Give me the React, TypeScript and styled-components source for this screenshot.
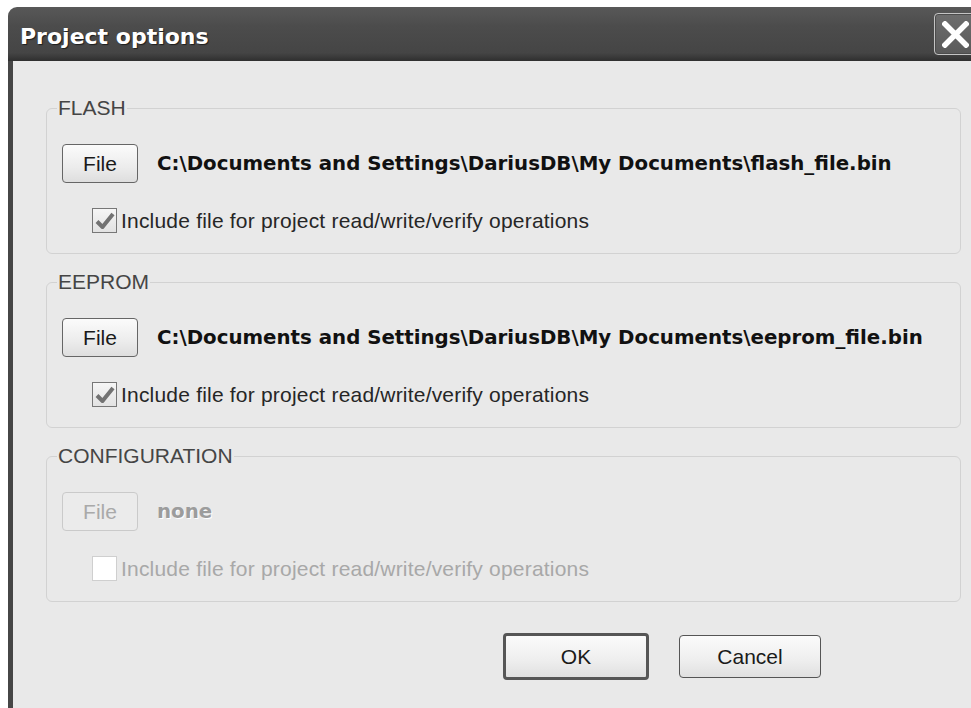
import React from 'react';
import styled, { createGlobalStyle } from 'styled-components';

const GlobalStyle = createGlobalStyle`
  html, body {
    margin: 0;
    padding: 0;
    background: #ffffff;
    overflow: hidden;
  }
  body {
    font-family: 'Liberation Sans', Arial, sans-serif;
  }
`;

const Window = styled.div`
  margin: 7px 0 0 8px;
  height: 701px;
  display: flex;
  flex-direction: column;
  overflow: hidden;
  border-top-left-radius: 9px;
`;

const TitleBar = styled.div`
  height: 54px;
  flex: none;
  display: flex;
  align-items: flex-start;
  justify-content: space-between;
  background: linear-gradient(#585858 0%, #4c4c4c 35%, #454545 85%, #2f2f2f 100%);
`;

const Title = styled.h1`
  margin: 0;
  padding: 17px 0 0 12px;
  font-family: 'DejaVu Sans', Tahoma, sans-serif;
  font-weight: bold;
  font-size: 22px;
  line-height: 26px;
  color: #ffffff;
  text-shadow: 1px 1px 1px #1e1e1e;
`;

const CloseButton = styled.button`
  margin: 6px -6px 0 0;
  width: 43px;
  height: 42px;
  padding: 0;
  border: 1px solid #c4c4c4;
  border-radius: 4px;
  background: linear-gradient(#6e6e6e, #5a5a5a);
  display: flex;
  align-items: center;
  justify-content: center;
  box-shadow: inset 0 0 0 1px #4c4c4c;
`;

const Body = styled.div`
  flex: 1;
  background: #e9e9e9;
  border-left: 5px solid #464646;
  padding: 35px 10px 0 33px;
  display: flex;
  flex-direction: column;
`;

const Group = styled.fieldset`
  margin: 0 0 16px 0;
  padding: 24px 0 20px 15px;
  border: 1px solid #d2d2d2;
  border-radius: 6px;
  min-width: 0;
`;

const Legend = styled.legend`
  margin-left: -5px;
  padding: 0 1px;
  font-size: 21px;
  line-height: 24px;
  color: #454545;
`;

const FileRow = styled.div`
  display: flex;
  align-items: center;
  gap: 19px;
`;

const PushButton = styled.button<{ $disabled?: boolean }>`
  width: 76px;
  height: 39px;
  padding: 0;
  font-family: 'Liberation Sans', Arial, sans-serif;
  font-size: 21px;
  border-radius: 4px;
  border: 1px solid ${p => (p.$disabled ? '#cacaca' : '#666666')};
  background: ${p => (p.$disabled ? '#ebebeb' : 'linear-gradient(#fbfbfb, #ececec 60%, #dedede)')};
  color: ${p => (p.$disabled ? '#a9a9a9' : '#1a1a1a')};
`;

const Path = styled.span<{ $disabled?: boolean }>`
  font-family: 'DejaVu Sans', Verdana, sans-serif;
  font-weight: bold;
  font-size: 19.8px;
  color: ${p => (p.$disabled ? '#9c9c9c' : '#111111')};
  text-shadow: ${p => (p.$disabled ? '1px 1px 0 #ffffff' : 'none')};
`;

const CheckRow = styled.label<{ $disabled?: boolean }>`
  margin: 25px 0 0 30px;
  display: flex;
  align-items: center;
  gap: 4px;
  font-size: 21px;
  letter-spacing: 0.2px;
  color: ${p => (p.$disabled ? '#a8a8a8' : '#262626')};
`;

const Box = styled.span<{ $disabled?: boolean }>`
  width: 25px;
  height: 25px;
  box-sizing: border-box;
  border: 1px solid ${p => (p.$disabled ? '#cfcfcf' : '#777777')};
  background: ${p => (p.$disabled ? '#ffffff' : 'linear-gradient(#f6f6f6, #e2e2e2)')};
  display: flex;
  align-items: center;
  justify-content: center;
`;

const Footer = styled.div`
  margin-top: 15px;
  display: flex;
  align-items: center;
  justify-content: flex-end;
  gap: 30px;
  padding-right: 140px;
`;

const DialogButton = styled.button<{ $default?: boolean }>`
  width: ${p => (p.$default ? 146 : 142)}px;
  height: ${p => (p.$default ? 47 : 43)}px;
  padding: 0;
  font-family: 'Liberation Sans', Arial, sans-serif;
  font-size: 21px;
  color: #1a1a1a;
  border-radius: 4px;
  border: ${p => (p.$default ? '3px solid #565656' : '1px solid #555555')};
  background: linear-gradient(#fbfbfb, #eeeeee 60%, #e0e0e0);
`;

type Section = {
  title: string,
  path: string,
  disabled?: boolean,
};

const sections: Section[] = [
  { title: 'FLASH', path: 'C:\\Documents and Settings\\DariusDB\\My Documents\\flash_file.bin' },
  { title: 'EEPROM', path: 'C:\\Documents and Settings\\DariusDB\\My Documents\\eeprom_file.bin' },
  { title: 'CONFIGURATION', path: 'none', disabled: true },
];

const Check = () => (
  <svg width='20' height='18' viewBox='0 0 20 18'>
    <path d='M2 9.5 L7.5 15 L18 2' fill='none' stroke='#727272' strokeWidth='4' strokeLinejoin='round' />
  </svg>
);

const Cross = () => (
  <svg width='27' height='27' viewBox='0 0 27 27'>
    <path d='M3 3 L24 24 M24 3 L3 24' stroke='#ffffff' strokeWidth='5.5' strokeLinecap='square' />
  </svg>
);

const App = () => (
  <>
    <GlobalStyle />
    <Window>
      <TitleBar>
        <Title>Project options</Title>
        <CloseButton><Cross /></CloseButton>
      </TitleBar>
      <Body>
        {sections.map(s => (
          <Group key={s.title}>
            <Legend>{s.title}</Legend>
            <FileRow>
              <PushButton $disabled={s.disabled}>File</PushButton>
              <Path $disabled={s.disabled}>{s.path}</Path>
            </FileRow>
            <CheckRow $disabled={s.disabled}>
              <Box $disabled={s.disabled}>{!s.disabled && <Check />}</Box>
              Include file for project read/write/verify operations
            </CheckRow>
          </Group>
        ))}
        <Footer>
          <DialogButton $default>OK</DialogButton>
          <DialogButton>Cancel</DialogButton>
        </Footer>
      </Body>
    </Window>
  </>
);

export default App;
